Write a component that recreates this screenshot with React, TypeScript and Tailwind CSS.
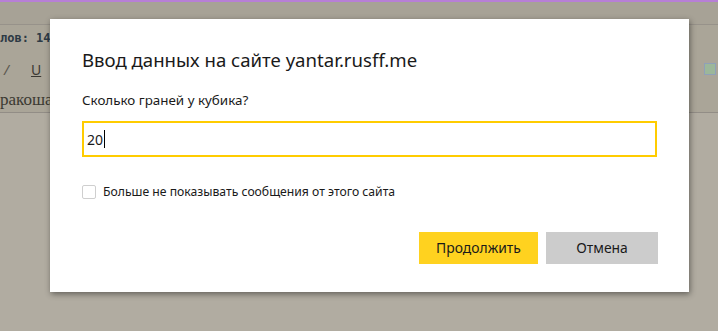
import React, { useState } from "react";

const font = { fontFamily: '"Noto Sans", "Open Sans", sans-serif' };

const App: React.FC = () => {
  const [value, setValue] = useState("20");
  const [dontShow, setDontShow] = useState(false);

  return (
    <div className="relative w-[718px] h-[331px] overflow-hidden bg-[#b0aa9f]" style={font}>
      {/* page behind the dialog, dimmed */}
      <div className="h-[2px] bg-[#b77fd6]" />
      <div className="h-[23px] bg-[#a7a296] border-b border-[#97928a]" />
      <div className="h-[88px] bg-[#aaa598] border-b border-[#928d86] flex flex-col">
        <div className="h-[25px] shrink-0 flex items-center text-[12px] font-bold text-[#2d3a45]" style={{ fontFamily: '"DejaVu Sans Mono", monospace' }}>
          лов: 14
        </div>
        <div className="h-[38px] shrink-0 flex items-center text-[14px] text-[#3a3833]">
          <span className="ml-[4px] italic text-[#5a574f]">/</span>
          <span className="ml-[22px] underline">U</span>
          <div className="ml-auto mr-[2px] flex items-center gap-[16px]">
            <span className="w-[5px] h-[14px] bg-[#c9a46a]" />
            <span className="w-[12px] h-[12px] border border-[#8fa0b8] bg-[#9cb79a]" />
          </div>
        </div>
        <div className="h-[24px] shrink-0 flex items-center text-[17px] text-[#3b3932]" style={{ fontFamily: '"Liberation Serif", serif' }}>
          ракоша
        </div>
      </div>
      <div className="h-full bg-[#b1aca1]" />

      {/* dialog */}
      <div className="absolute left-[50px] top-[19px] w-[639px] h-[273px] bg-white shadow-[1px_2px_6px_rgba(0,0,0,0.45)] px-[32px] pt-[28px]">
        <div className="text-[18.6px] leading-[26px] text-[#1a1a1a]">Ввод данных на сайте yantar.rusff.me</div>
        <div className="mt-[17px] text-[13.4px] leading-[20px] text-[#1a1a1a]">Сколько граней у кубика?</div>
        <div className="relative mt-[11px]">
          <input
            autoFocus
            className="block w-[575px] h-[36px] border-2 border-[#ffcc00] px-[3px] text-[14px] text-[#1a1a1a] caret-transparent outline-none"
            value={value}
            onChange={(e) => setValue(e.target.value)}
          />
          {/* text caret */}
          <span className="absolute left-[22px] top-[9px] w-[1px] h-[18px] bg-black" />
        </div>
        <label className="mt-[26px] flex items-center gap-[7px] text-[12.2px] text-[#1a1a1a]">
          <input
            type="checkbox"
            className="appearance-none w-[14px] h-[14px] border border-[#cfcfcf] rounded-[2px] bg-white"
            checked={dontShow}
            onChange={(e) => setDontShow(e.target.checked)}
          />
          Больше не показывать сообщения от этого сайта
        </label>
        <div className="mt-[31px] flex justify-end gap-[8px]">
          <button type="button" className="w-[119px] h-[32px] bg-[#ffd21f] text-[13.9px] text-[#1a1a1a]">
            Продолжить
          </button>
          <button type="button" className="w-[112px] h-[32px] bg-[#cccccc] text-[13.9px] text-[#1a1a1a] mr-[-1px]">
            Отмена
          </button>
        </div>
      </div>
    </div>
  );
};

export default App;
